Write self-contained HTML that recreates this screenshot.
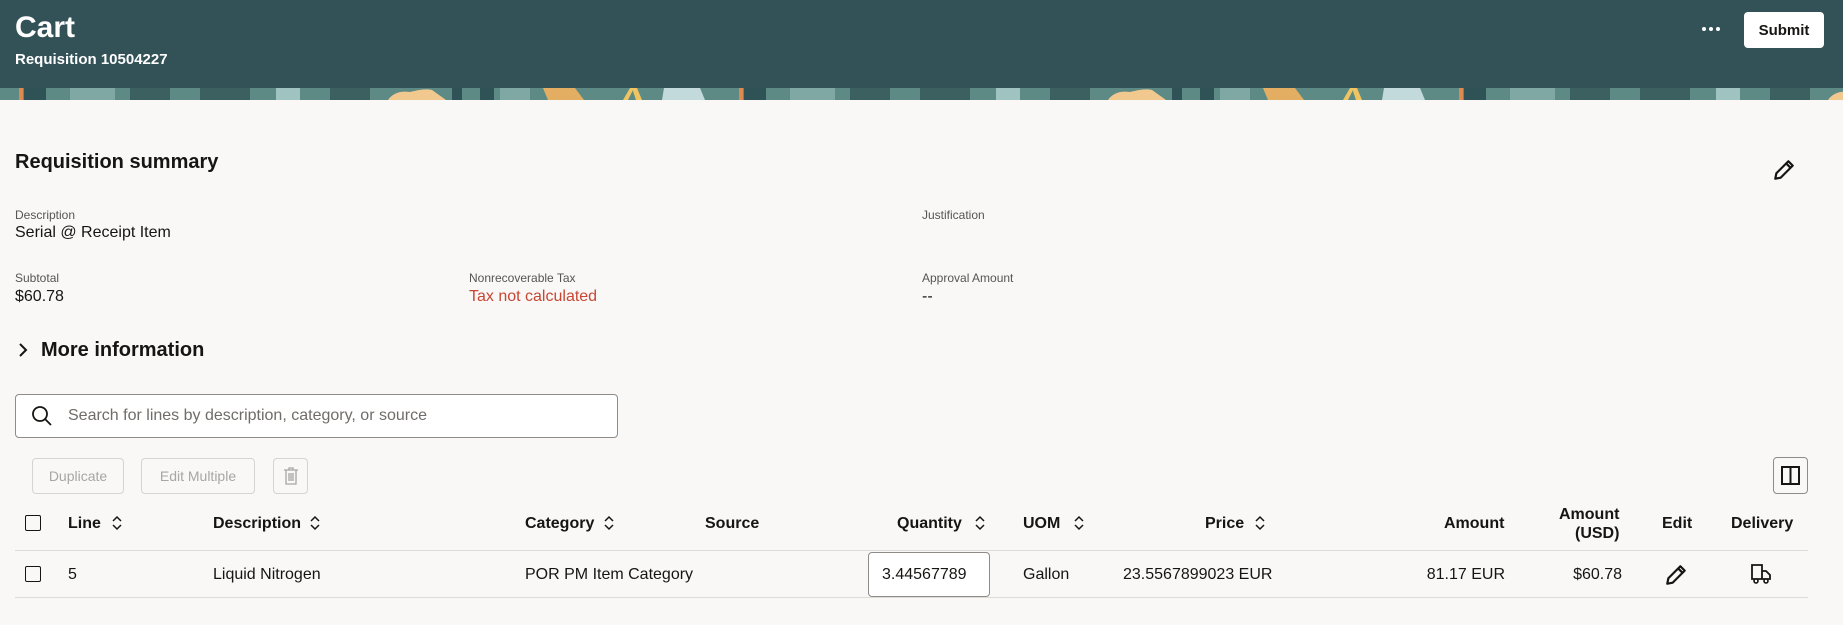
<!DOCTYPE html>
<html><head><meta charset="utf-8"><style>
*{margin:0;padding:0;box-sizing:border-box}
body{width:1843px;height:625px;background:#f9f8f6;font-family:"Liberation Sans",sans-serif;color:#161513;position:relative;overflow:hidden}
.a{position:absolute;white-space:nowrap}
.lbl{font-size:12px;color:#555}
.val{font-size:16px}
.th{font-size:16px;font-weight:bold;color:#161513}
.td{font-size:16px}
.btn{position:absolute;border:1px solid #d6d4d1;border-radius:4px;color:#a8a6a3;font-size:14px;display:flex;align-items:center;justify-content:center;background:#f9f8f6}
.cb{position:absolute;width:16px;height:16px;border:1.5px solid #161513;border-radius:2px}
.sort{position:absolute;width:12px;height:16px}
</style></head><body>
<div class="a" style="left:0;top:0;width:1843px;height:100px;background:#325258"></div>
<svg class="a" style="left:0;top:88px" width="1843" height="12">
<defs><pattern id="p" width="720" height="12" patternUnits="userSpaceOnUse">
<rect width="720" height="12" fill="#5e8a86"/>
<rect x="19" width="4" height="12" fill="#e0894e"/>
<rect x="24" width="22" height="12" fill="#2f5257"/>
<rect x="70" width="45" height="12" fill="#7fa7a3"/>
<rect x="130" width="40" height="12" fill="#3c5f60"/>
<rect x="200" width="50" height="12" fill="#3c5f60"/>
<rect x="276" width="24" height="12" fill="#9fc3c0"/>
<rect x="330" width="40" height="12" fill="#3c5f60"/>
<path d="M388 12 Q395 2 410 4 Q425 0 432 2 L446 12Z" fill="#f1c98f"/>
<rect x="452" width="10" height="12" fill="#2f5257"/>
<rect x="480" width="14" height="12" fill="#2f5257"/>
<rect x="500" width="30" height="12" fill="#7fa7a3"/>
<path d="M543 0 L575 0 L584 12 L548 12Z" fill="#e3ae62"/>
<path d="M623 12 L630 0 L634 0 L628 12Z" fill="#f0c460"/>
<path d="M636 12 L632 0 L637 0 L642 12Z" fill="#f0c460"/>
<path d="M664 0 L700 0 L705 12 L662 12Z" fill="#c2dadb"/>
</pattern></defs>
<rect width="1843" height="12" fill="url(#p)"/></svg>
<div class="a" style="left:15px;top:11px;font-size:30px;font-weight:bold;color:#fff">Cart</div>
<div class="a" style="left:15px;top:51px;font-size:15px;font-weight:bold;color:#fff">Requisition 10504227</div>
<div class="a" style="left:1702px;top:27px;width:4px;height:4px;border-radius:2px;background:#fff;box-shadow:7px 0 #fff,14px 0 #fff"></div>
<div class="a" style="left:1744px;top:12px;width:80px;height:36px;background:#fff;border-radius:4px;font-size:15px;font-weight:bold;display:flex;align-items:center;justify-content:center">Submit</div>

<div class="a" style="left:15px;top:151px;font-size:20px;font-weight:bold">Requisition summary</div>
<svg class="a" style="left:1772px;top:158px" width="24" height="24" viewBox="0 0 22 22"><path d="M3 19 L4 14 L15 3 L19 7 L8 18 Z M13 5 L17 9" fill="none" stroke="#161513" stroke-width="2" stroke-linejoin="round"/></svg>
<div class="a lbl" style="left:15px;top:208px">Description</div>
<div class="a val" style="left:15px;top:224px">Serial @ Receipt Item</div>
<div class="a lbl" style="left:922px;top:208px">Justification</div>
<div class="a lbl" style="left:15px;top:271px">Subtotal</div>
<div class="a val" style="left:15px;top:288px">$60.78</div>
<div class="a lbl" style="left:469px;top:271px">Nonrecoverable Tax</div>
<div class="a val" style="left:469px;top:288px;color:#c74634">Tax not calculated</div>
<div class="a lbl" style="left:922px;top:271px">Approval Amount</div>
<div class="a val" style="left:922px;top:288px">--</div>
<svg class="a" style="left:17px;top:342px" width="12" height="16"><path d="M3 2 L9 8 L3 14" fill="none" stroke="#161513" stroke-width="2"/></svg>
<div class="a" style="left:41px;top:339px;font-size:20px;font-weight:bold">More information</div>

<div class="a" style="left:15px;top:394px;width:603px;height:44px;border:1px solid #8f8c88;border-radius:4px;background:#fff"></div>
<svg class="a" style="left:31px;top:405px" width="22" height="22"><circle cx="9" cy="9" r="7" fill="none" stroke="#161513" stroke-width="1.8"/><path d="M14 14 L20 20" stroke="#161513" stroke-width="1.8"/></svg>
<div class="a" style="left:68px;top:407px;font-size:16px;color:#6f6c69">Search for lines by description, category, or source</div>

<div class="btn" style="left:32px;top:458px;width:92px;height:36px">Duplicate</div>
<div class="btn" style="left:141px;top:458px;width:114px;height:36px">Edit Multiple</div>
<div class="btn" style="left:273px;top:458px;width:35px;height:36px"><svg width="16" height="18"><path d="M1 3 H15 M6 3 V1 H10 V3 M3 3 V17 H13 V3 M6 6 V14 M8 6 V14 M10 6 V14" fill="none" stroke="#a8a6a3" stroke-width="1.3"/></svg></div>
<div class="a" style="left:1773px;top:457px;width:35px;height:37px;border:1px solid #8f8c88;border-radius:4px"></div>
<svg class="a" style="left:1781px;top:466px" width="19" height="19"><rect x="1" y="1" width="17" height="17" fill="none" stroke="#161513" stroke-width="2"/><path d="M9.5 1 V18" stroke="#161513" stroke-width="2"/></svg>

<div class="cb" style="left:25px;top:515px"></div>
<div class="a th" style="left:68px;top:515px">Line</div>
<div class="a th" style="left:213px;top:515px">Description</div>
<div class="a th" style="left:525px;top:515px">Category</div>
<div class="a th" style="left:705px;top:515px">Source</div>
<div class="a th" style="left:897px;top:515px">Quantity</div>
<div class="a th" style="left:1023px;top:515px">UOM</div>
<div class="a th" style="left:1205px;top:515px">Price</div>
<div class="a th" style="left:1444px;top:515px">Amount</div>
<div class="a th" style="left:1559px;top:505px;text-align:right;line-height:19px">Amount<br>(USD)</div>
<div class="a th" style="left:1662px;top:515px">Edit</div>
<div class="a th" style="left:1731px;top:515px">Delivery</div>
<svg width="0" height="0" style="position:absolute"><defs><path id="s" d="M2 6 L6 2 L10 6 M2 10 L6 14 L10 10" fill="none" stroke="#161513" stroke-width="1.5"/></defs></svg>
<svg class="sort" style="left:111px;top:515px"><use href="#s"/></svg>
<svg class="sort" style="left:309px;top:515px"><use href="#s"/></svg>
<svg class="sort" style="left:603px;top:515px"><use href="#s"/></svg>
<svg class="sort" style="left:974px;top:515px"><use href="#s"/></svg>
<svg class="sort" style="left:1073px;top:515px"><use href="#s"/></svg>
<svg class="sort" style="left:1254px;top:515px"><use href="#s"/></svg>
<div class="a" style="left:15px;top:550px;width:1793px;height:1px;background:#dedcd9"></div>

<div class="cb" style="left:25px;top:566px"></div>
<div class="a td" style="left:68px;top:566px">5</div>
<div class="a td" style="left:213px;top:566px">Liquid Nitrogen</div>
<div class="a td" style="left:525px;top:566px">POR PM Item Category</div>
<div class="a" style="left:868px;top:552px;width:122px;height:45px;border:1px solid #8f8c88;border-radius:4px;background:#fff"></div>
<div class="a td" style="left:882px;top:566px">3.44567789</div>
<div class="a td" style="left:1023px;top:566px">Gallon</div>
<div class="a td" style="left:1123px;top:566px">23.5567899023 EUR</div>
<div class="a td" style="left:1505px;top:566px;transform:translateX(-100%)">81.17 EUR</div>
<div class="a td" style="left:1622px;top:566px;transform:translateX(-100%)">$60.78</div>
<svg class="a" style="left:1664px;top:563px" width="24" height="24" viewBox="0 0 22 22"><path d="M3 19 L4 14 L15 3 L19 7 L8 18 Z M13 5 L17 9" fill="none" stroke="#161513" stroke-width="2" stroke-linejoin="round"/></svg>
<svg class="a" style="left:1750px;top:563px" width="22" height="22"><path d="M2 2 H12 V16 H2 Z M12 8 H16 L20 12 V16 H12" fill="none" stroke="#161513" stroke-width="1.8"/><circle cx="6" cy="18" r="2" fill="#fff" stroke="#161513" stroke-width="1.6"/><circle cx="16" cy="18" r="2" fill="#fff" stroke="#161513" stroke-width="1.6"/></svg>
<div class="a" style="left:15px;top:597px;width:1793px;height:1px;background:#dedcd9"></div>
</body></html>
